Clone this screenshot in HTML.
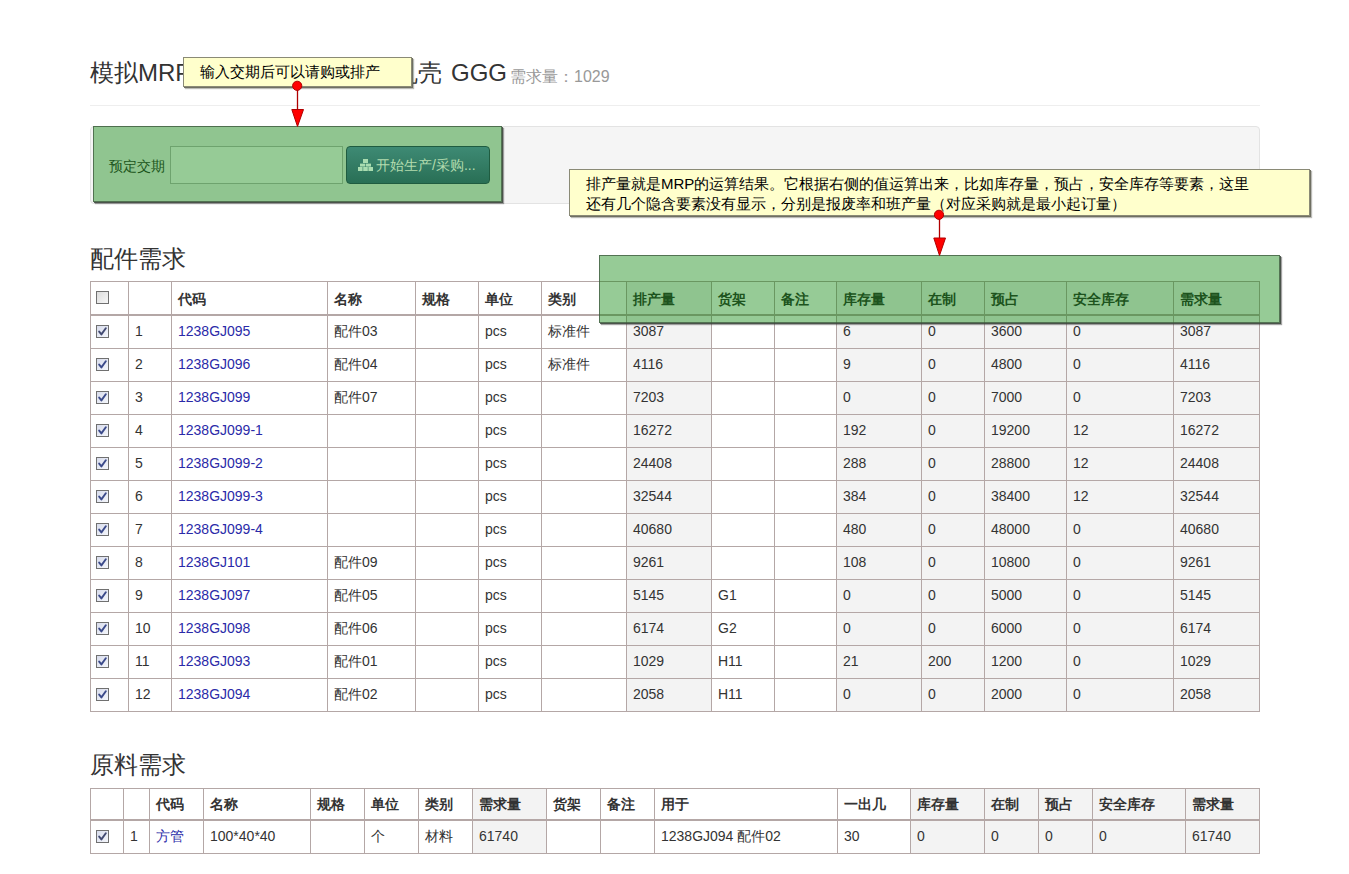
<!DOCTYPE html>
<html><head><meta charset="utf-8"><title>MRP</title>
<style>
*{margin:0;padding:0;box-sizing:border-box}
html,body{width:1349px;height:874px;overflow:hidden;background:#fff}
body{font-family:"Liberation Sans",sans-serif;font-size:14px;color:#333;position:relative}
.abs{position:absolute}
h1{position:absolute;left:90px;top:58px;font-size:24px;font-weight:normal;line-height:30px;white-space:nowrap;color:#333}
h1 small{font-size:16px;color:#999}
.hr{position:absolute;left:90px;top:105px;width:1170px;height:1px;background:#eee}
.well{position:absolute;left:90px;top:126px;width:1170px;height:78px;background:#f5f5f5;border:1px solid #e3e3e3;border-radius:4px}
h2{position:absolute;left:90px;font-size:24px;font-weight:normal;line-height:30px;color:#333}
table.grid{position:absolute;left:90px;border-collapse:separate;border-spacing:0;table-layout:fixed;width:1170px;border-left:1px solid #b4a7a6;border-top:1px solid #b4a7a6}
.grid th,.grid td{border-right:1px solid #b4a7a6;border-bottom:1px solid #b4a7a6;text-align:left;padding:0 0 0 6px;white-space:nowrap;overflow:hidden;line-height:20px;vertical-align:middle}
.grid th{font-weight:bold;border-bottom:2px solid #b4a7a6;padding-top:2px}
.grid td{padding-bottom:2px}
.grid th .cb{top:-3px}
.grid td .cb{top:-1px}
.t2 th{padding-top:0}
.grid .g{background:#f3f3f3}
.t1{top:281px}
.t1 th{height:34px}
.t1 td{height:33px}
.t2{top:788px}
.t2 th{height:32px}
.t2 td{height:33px}
.grid a{color:#2a2aa8;text-decoration:none}
.cb{display:inline-block;width:13px;height:13px;border:1px solid #707070;background:linear-gradient(135deg,#dcdcdc,#f6f6f6);vertical-align:middle;position:relative;margin-left:-1px}
.cb.on{background:linear-gradient(135deg,#d8dcec,#f4f6fb)}
.cb svg{position:absolute;left:1px;top:1px}
.tip{position:absolute;background:#ffffcc;border:1px solid #8a8a76;box-shadow:1px 1px 0 #6f6f62,2px 2px 1px rgba(60,60,50,.35);color:#000;font-size:15px;line-height:19.5px;font-family:"Liberation Sans",sans-serif}
.gbox{position:absolute;background:rgba(0,128,0,.41);border:1px solid rgba(60,85,60,.75);box-shadow:1px 1px 0 rgba(60,70,60,.85),2px 2px 1px rgba(50,50,50,.45)}
</style></head><body>
<h1>模拟MRP<span class="abs" style="left:304px;top:0">机壳<span style="margin-left:9px">GGG</span><small style="margin-left:3px;position:relative;top:1px">需求量：1029</small></span></h1>
<div class="hr"></div>
<div class="well">
  <span class="abs" style="left:18px;top:29px;font-size:14px;line-height:20px;color:#333">预定交期</span>
  <div class="abs" style="left:79px;top:19px;width:173px;height:38px;background:#fff;border:1px solid #bbb;box-shadow:inset 1px 1px 0 #fff,inset -1px -1px 0 #fff"></div>
</div>
<h2 style="top:244px">配件需求</h2>
<table class="grid t1"><colgroup><col style="width:38px"><col style="width:43px"><col style="width:156px"><col style="width:88px"><col style="width:63px"><col style="width:63px"><col style="width:85px"><col style="width:85px"><col style="width:63px"><col style="width:62px"><col style="width:85px"><col style="width:63px"><col style="width:82px"><col style="width:107px"><col style="width:86px"></colgroup><thead><tr><th><span class="cb"></span></th><th></th><th>代码</th><th>名称</th><th>规格</th><th>单位</th><th>类别</th><th class="g">排产量</th><th>货架</th><th>备注</th><th class="g">库存量</th><th class="g">在制</th><th class="g">预占</th><th class="g">安全库存</th><th class="g">需求量</th></tr></thead><tbody><tr><td><span class="cb on"><svg width="9" height="9" viewBox="0 0 9 9"><path d="M1.2 4.6 L3.4 7.4 L7.8 1.2" fill="none" stroke="#424a72" stroke-width="1.9" stroke-linecap="round" stroke-linejoin="round"/></svg></span></td><td>1</td><td><a>1238GJ095</a></td><td>配件03</td><td></td><td>pcs</td><td>标准件</td><td class="g">3087</td><td></td><td></td><td class="g">6</td><td class="g">0</td><td class="g">3600</td><td class="g">0</td><td class="g">3087</td></tr><tr><td><span class="cb on"><svg width="9" height="9" viewBox="0 0 9 9"><path d="M1.2 4.6 L3.4 7.4 L7.8 1.2" fill="none" stroke="#3b4a8a" stroke-width="1.9" stroke-linecap="round" stroke-linejoin="round"/></svg></span></td><td>2</td><td><a>1238GJ096</a></td><td>配件04</td><td></td><td>pcs</td><td>标准件</td><td class="g">4116</td><td></td><td></td><td class="g">9</td><td class="g">0</td><td class="g">4800</td><td class="g">0</td><td class="g">4116</td></tr><tr><td><span class="cb on"><svg width="9" height="9" viewBox="0 0 9 9"><path d="M1.2 4.6 L3.4 7.4 L7.8 1.2" fill="none" stroke="#3b4a8a" stroke-width="1.9" stroke-linecap="round" stroke-linejoin="round"/></svg></span></td><td>3</td><td><a>1238GJ099</a></td><td>配件07</td><td></td><td>pcs</td><td></td><td class="g">7203</td><td></td><td></td><td class="g">0</td><td class="g">0</td><td class="g">7000</td><td class="g">0</td><td class="g">7203</td></tr><tr><td><span class="cb on"><svg width="9" height="9" viewBox="0 0 9 9"><path d="M1.2 4.6 L3.4 7.4 L7.8 1.2" fill="none" stroke="#3b4a8a" stroke-width="1.9" stroke-linecap="round" stroke-linejoin="round"/></svg></span></td><td>4</td><td><a>1238GJ099-1</a></td><td></td><td></td><td>pcs</td><td></td><td class="g">16272</td><td></td><td></td><td class="g">192</td><td class="g">0</td><td class="g">19200</td><td class="g">12</td><td class="g">16272</td></tr><tr><td><span class="cb on"><svg width="9" height="9" viewBox="0 0 9 9"><path d="M1.2 4.6 L3.4 7.4 L7.8 1.2" fill="none" stroke="#3b4a8a" stroke-width="1.9" stroke-linecap="round" stroke-linejoin="round"/></svg></span></td><td>5</td><td><a>1238GJ099-2</a></td><td></td><td></td><td>pcs</td><td></td><td class="g">24408</td><td></td><td></td><td class="g">288</td><td class="g">0</td><td class="g">28800</td><td class="g">12</td><td class="g">24408</td></tr><tr><td><span class="cb on"><svg width="9" height="9" viewBox="0 0 9 9"><path d="M1.2 4.6 L3.4 7.4 L7.8 1.2" fill="none" stroke="#3b4a8a" stroke-width="1.9" stroke-linecap="round" stroke-linejoin="round"/></svg></span></td><td>6</td><td><a>1238GJ099-3</a></td><td></td><td></td><td>pcs</td><td></td><td class="g">32544</td><td></td><td></td><td class="g">384</td><td class="g">0</td><td class="g">38400</td><td class="g">12</td><td class="g">32544</td></tr><tr><td><span class="cb on"><svg width="9" height="9" viewBox="0 0 9 9"><path d="M1.2 4.6 L3.4 7.4 L7.8 1.2" fill="none" stroke="#3b4a8a" stroke-width="1.9" stroke-linecap="round" stroke-linejoin="round"/></svg></span></td><td>7</td><td><a>1238GJ099-4</a></td><td></td><td></td><td>pcs</td><td></td><td class="g">40680</td><td></td><td></td><td class="g">480</td><td class="g">0</td><td class="g">48000</td><td class="g">0</td><td class="g">40680</td></tr><tr><td><span class="cb on"><svg width="9" height="9" viewBox="0 0 9 9"><path d="M1.2 4.6 L3.4 7.4 L7.8 1.2" fill="none" stroke="#3b4a8a" stroke-width="1.9" stroke-linecap="round" stroke-linejoin="round"/></svg></span></td><td>8</td><td><a>1238GJ101</a></td><td>配件09</td><td></td><td>pcs</td><td></td><td class="g">9261</td><td></td><td></td><td class="g">108</td><td class="g">0</td><td class="g">10800</td><td class="g">0</td><td class="g">9261</td></tr><tr><td><span class="cb on"><svg width="9" height="9" viewBox="0 0 9 9"><path d="M1.2 4.6 L3.4 7.4 L7.8 1.2" fill="none" stroke="#3b4a8a" stroke-width="1.9" stroke-linecap="round" stroke-linejoin="round"/></svg></span></td><td>9</td><td><a>1238GJ097</a></td><td>配件05</td><td></td><td>pcs</td><td></td><td class="g">5145</td><td>G1</td><td></td><td class="g">0</td><td class="g">0</td><td class="g">5000</td><td class="g">0</td><td class="g">5145</td></tr><tr><td><span class="cb on"><svg width="9" height="9" viewBox="0 0 9 9"><path d="M1.2 4.6 L3.4 7.4 L7.8 1.2" fill="none" stroke="#3b4a8a" stroke-width="1.9" stroke-linecap="round" stroke-linejoin="round"/></svg></span></td><td>10</td><td><a>1238GJ098</a></td><td>配件06</td><td></td><td>pcs</td><td></td><td class="g">6174</td><td>G2</td><td></td><td class="g">0</td><td class="g">0</td><td class="g">6000</td><td class="g">0</td><td class="g">6174</td></tr><tr><td><span class="cb on"><svg width="9" height="9" viewBox="0 0 9 9"><path d="M1.2 4.6 L3.4 7.4 L7.8 1.2" fill="none" stroke="#3b4a8a" stroke-width="1.9" stroke-linecap="round" stroke-linejoin="round"/></svg></span></td><td>11</td><td><a>1238GJ093</a></td><td>配件01</td><td></td><td>pcs</td><td></td><td class="g">1029</td><td>H11</td><td></td><td class="g">21</td><td class="g">200</td><td class="g">1200</td><td class="g">0</td><td class="g">1029</td></tr><tr><td><span class="cb on"><svg width="9" height="9" viewBox="0 0 9 9"><path d="M1.2 4.6 L3.4 7.4 L7.8 1.2" fill="none" stroke="#3b4a8a" stroke-width="1.9" stroke-linecap="round" stroke-linejoin="round"/></svg></span></td><td>12</td><td><a>1238GJ094</a></td><td>配件02</td><td></td><td>pcs</td><td></td><td class="g">2058</td><td>H11</td><td></td><td class="g">0</td><td class="g">0</td><td class="g">2000</td><td class="g">0</td><td class="g">2058</td></tr></tbody></table>
<h2 style="top:750px">原料需求</h2>
<table class="grid t2"><colgroup><col style="width:33px"><col style="width:26px"><col style="width:54px"><col style="width:107px"><col style="width:54px"><col style="width:54px"><col style="width:54px"><col style="width:74px"><col style="width:54px"><col style="width:54px"><col style="width:183px"><col style="width:73px"><col style="width:74px"><col style="width:54px"><col style="width:54px"><col style="width:93px"><col style="width:74px"></colgroup><thead><tr><th></th><th></th><th>代码</th><th>名称</th><th>规格</th><th>单位</th><th>类别</th><th class="g">需求量</th><th>货架</th><th>备注</th><th>用于</th><th>一出几</th><th class="g">库存量</th><th class="g">在制</th><th class="g">预占</th><th class="g">安全库存</th><th class="g">需求量</th></tr></thead><tbody><tr><td><span class="cb on"><svg width="9" height="9" viewBox="0 0 9 9"><path d="M1.2 4.6 L3.4 7.4 L7.8 1.2" fill="none" stroke="#424a72" stroke-width="1.9" stroke-linecap="round" stroke-linejoin="round"/></svg></span></td><td>1</td><td><a>方管</a></td><td>100*40*40</td><td></td><td>个</td><td>材料</td><td class="g">61740</td><td></td><td></td><td>1238GJ094 配件02</td><td>30</td><td class="g">0</td><td class="g">0</td><td class="g">0</td><td class="g">0</td><td class="g">61740</td></tr></tbody></table>
<div class="gbox" style="left:93px;top:126px;width:409px;height:76px"></div>

<div class="abs btn" style="left:346px;top:146px;width:144px;height:38px;border-radius:4px;background:linear-gradient(#3e8a74,#296f55);border:1px solid #1f5c40;color:#b3dcae;font-size:14px;line-height:20px;padding:8px 0 0 11px;white-space:nowrap"><svg width="15" height="12" viewBox="0 0 15 12" style="vertical-align:-1px;margin-right:3px"><g fill="#a9dcb0"><rect x="5" y="0" width="5" height="4"/><rect x="2" y="4.6" width="5.2" height="3"/><rect x="7.8" y="4.6" width="5.2" height="3"/><rect x="0" y="8" width="4.6" height="4"/><rect x="5.2" y="8" width="4.6" height="4"/><rect x="10.4" y="8" width="4.6" height="4"/></g></svg>开始生产/采购...</div>
<div class="gbox" style="left:599px;top:255px;width:681px;height:68px"></div>
<div class="tip" style="left:183px;top:57px;width:229px;height:30px;padding:4px 0 0 16px">输入交期后可以请购或排产</div>
<div class="tip" style="left:569px;top:169px;width:741px;height:47px;padding:4px 0 0 16px">排产量就是MRP的运算结果。它根据右侧的值运算出来，比如库存量，预占，安全库存等要素，这里<br>还有几个隐含要素没有显示，分别是报废率和班产量（对应采购就是最小起订量）</div>
<svg class="abs" style="left:0;top:0" width="1349" height="874">
 <g fill="#ff0000" stroke="#b00000" stroke-width="1">
  <circle cx="297.2" cy="85.8" r="4.6"/>
  <line x1="297.5" y1="90" x2="297.5" y2="110" stroke-width="1.3"/>
  <path d="M291.8 109.5 L303.5 109.5 L297.5 126.5 Z"/>
  <circle cx="939" cy="214.8" r="4.6"/>
  <line x1="939.5" y1="219" x2="939.5" y2="238" stroke-width="1.3"/>
  <path d="M933.8 238 L945.5 238 L939.5 255.5 Z"/>
 </g>
</svg>
</body></html>
